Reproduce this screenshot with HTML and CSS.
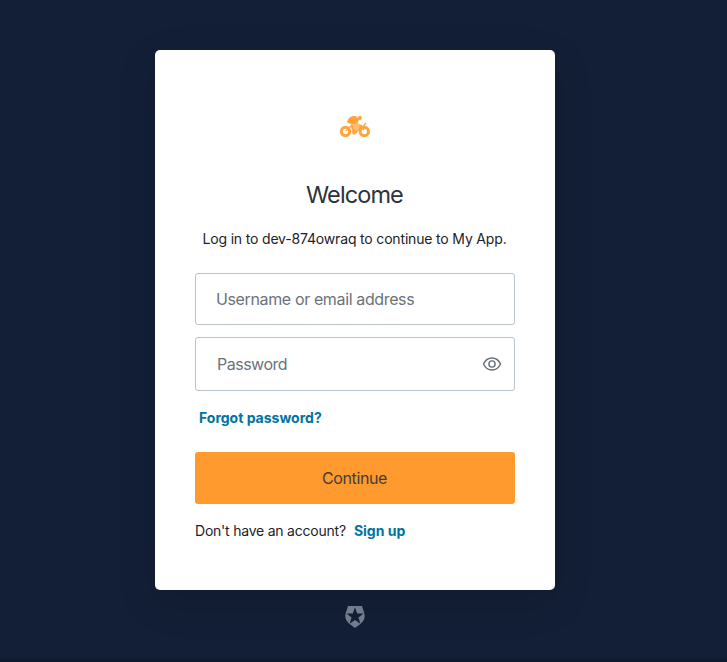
FILE: index.html
```html
<!DOCTYPE html>
<html lang="en">
<head>
<meta charset="utf-8">
<title>Log in | My App</title>
<link rel="stylesheet" href="styles.css">
</head>
<body>
<main class="page">
  <section class="card">
    <svg class="logo" viewBox="0 0 32 26" aria-label="My App">
      <g fill="none" stroke="#ffa33b">
        <circle cx="6.500" cy="17.500" r="4.200" stroke-width="3"/>
        <circle cx="25.300" cy="17.500" r="4.200" stroke-width="3"/>
        <path d="M7 17l5-5 5 7 6-8M13 11l2 9M17 19l5-7M21 11l4 5M24 13l3-4" stroke-width="1.300"/>
      </g>
      <path d="M8 8.800C8.500 4.600 11.500 2 15 2c2.300 0 4 1.200 4.800 3.400l-1 3-3 1.600-3.500 0z" fill="#ffa33b"/>
      <path d="M18.800 3l2.700-1.400 1.500 2.200-.8 2-2.800.5z" fill="#ffa33b"/>
      <path d="M12 10l7-1.500 3 3-3 2.500-1 4-2.500 3-2.500-1-.5-4z" fill="#ffa33b" opacity=".72"/>
    </svg>
    <h1 class="title">Welcome</h1>
    <p class="subtitle">Log in to dev-874owraq to continue to My App.</p>
    <form class="form">
      <input class="field" type="text" placeholder="Username or email address" aria-label="Username or email address">
      <div class="field field-password">
        <input class="bare" type="password" placeholder="Password" aria-label="Password">
        <svg class="eye" viewBox="0 0 20 16">
          <path d="M1.500 8C3.200 4.200 6.200 2 10 2s6.800 2.200 8.500 6c-1.700 3.800-4.700 6-8.500 6S3.200 11.800 1.500 8z"/>
          <circle cx="10" cy="8" r="3.100"/>
        </svg>
      </div>
      <a class="link forgot">Forgot password?</a>
      <button class="submit" type="button">Continue</button>
    </form>
    <p class="signup"><span class="question">Don't have an account?</span><a class="link">Sign up</a></p>
  </section>
  <svg class="badge" viewBox="0 0 20 22">
    <path fill="#727c8d" fill-rule="evenodd" d="M3 0h14l2.300 7.200c1.200 4.300-.3 8.100-3.600 10.500L10 22l-5.700-4.300C1 15.300-.5 11.500.7 7.200zM10 1.200L7.900 7.600H1.400L6.600 11.500 4.600 17.800 10 13.900l5.400 3.900L13.400 11.500l5.200-3.900h-6.500z"/>
  </svg>
</main>
</body>
</html>
```
FILE: styles.css
```css
* { box-sizing: border-box; }
body {
  margin: 0;
  font-family: Inter, sans-serif;
  font-size: 14px;
  color: #1e212a;
  background: #131f36;
}
.page {
  height: 662px;
  padding-top: 50px;
  padding-right: 17px;
  display: flex;
  flex-direction: column;
  align-items: center;
  border-bottom: 3px solid #111a30;
}
.card {
  width: 400px;
  height: 540px;
  padding: 64px 40px 0;
  border-radius: 5px;
  background: #fff;
  box-shadow: 0 12px 40px rgba(0, 0, 0, .12);
  display: flex;
  flex-direction: column;
}
.logo { width: 32px; height: 26px; align-self: center; }
.title {
  margin: 40px 1px 0 0;
  font-size: 23.5px;
  line-height: 30px;
  font-weight: 400;
  letter-spacing: -.9px;
  text-align: center;
  color: #2d333a;
}
.subtitle {
  margin: 19px 1px 0 0;
  line-height: 20px;
  letter-spacing: -.17px;
  text-align: center;
  white-space: nowrap;
}
.form { margin-top: 24px; display: flex; flex-direction: column; }
.field {
  width: 100%;
  height: 52px;
  padding: 0 20px;
  border: 1px solid #b9c1ca;
  border-radius: 3px;
  background: #fff;
  font: 16px Inter, sans-serif;
  letter-spacing: -.37px;
}
.field-password {
  height: 54px;
  margin-top: 12px;
  padding: 0 12px 0 21px;
  display: flex;
  align-items: center;
}
.bare { flex: 1; min-width: 0; padding: 0; border: 0; font: inherit; letter-spacing: -.5px; }
::placeholder { color: #6a737c; opacity: 1; }
.eye { width: 20px; height: 16px; fill: none; stroke: #65707b; stroke-width: 1.4; }
.link { color: #0073a3; font-weight: 700; }
.forgot { margin: 17px 0 0 4px; line-height: 20px; align-self: flex-start; }
.submit {
  height: 52px;
  margin-top: 24px;
  padding: 0 7px 0 6px;
  border: 0;
  border-radius: 3px;
  background: #ff9a2e;
  color: #3f3d3c;
  font: 16px Inter, sans-serif;
  letter-spacing: -.38px;
}
.signup { display: flex; gap: 8px; margin: 17px 0 0; line-height: 20px; }
.question { letter-spacing: -.22px; }
.badge { width: 20px; height: 22px; margin-top: 16px; }
```
